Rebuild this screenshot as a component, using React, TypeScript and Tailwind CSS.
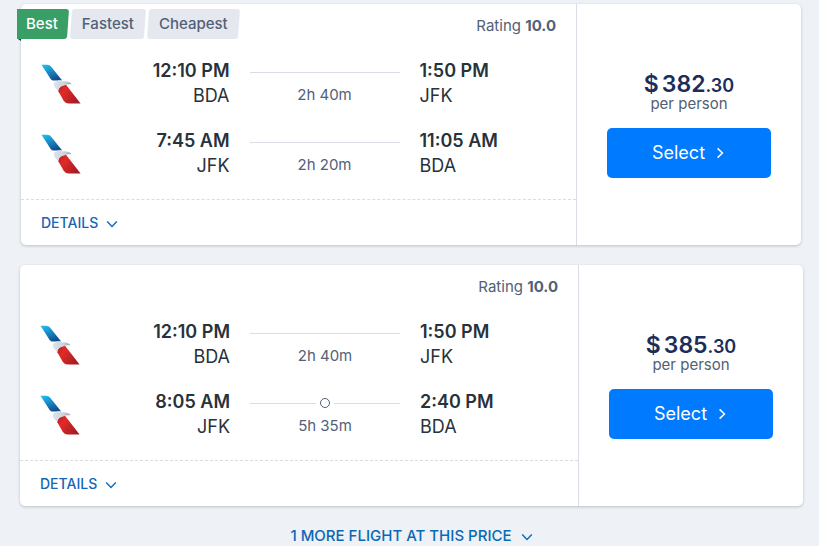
import { useId } from "react";

type Leg = {
  departTime: string;
  from: string;
  arriveTime: string;
  to: string;
  duration: string;
  stops: number;
};

type Flight = {
  id: string;
  rating: string;
  dollars: string;
  cents: string;
  badges: string[];
  legs: Leg[];
};

const flights: Flight[] = [
  {
    id: "f1",
    rating: "10.0",
    dollars: "382",
    cents: "30",
    badges: ["Best", "Fastest", "Cheapest"],
    legs: [
      { departTime: "12:10 PM", from: "BDA", arriveTime: "1:50 PM", to: "JFK", duration: "2h 40m", stops: 0 },
      { departTime: "7:45 AM", from: "JFK", arriveTime: "11:05 AM", to: "BDA", duration: "2h 20m", stops: 0 },
    ],
  },
  {
    id: "f2",
    rating: "10.0",
    dollars: "385",
    cents: "30",
    badges: [],
    legs: [
      { departTime: "12:10 PM", from: "BDA", arriveTime: "1:50 PM", to: "JFK", duration: "2h 40m", stops: 0 },
      { departTime: "8:05 AM", from: "JFK", arriveTime: "2:40 PM", to: "BDA", duration: "5h 35m", stops: 1 },
    ],
  },
];

function AirlineLogo() {
  const id = useId();
  return (
    <svg viewBox="0 0 40 40" className="mt-[5px] size-10" role="img" aria-label="American Airlines">
      <defs>
        <linearGradient id={`${id}b`} x1="0" y1="0" x2="0.5" y2="1">
          <stop offset="0" stopColor="#1fc4f4" />
          <stop offset="0.5" stopColor="#1a8cc8" />
          <stop offset="1" stopColor="#12518f" />
        </linearGradient>
        <linearGradient id={`${id}r`} x1="0" y1="0" x2="1" y2="0.6">
          <stop offset="0" stopColor="#b81f2a" />
          <stop offset="0.35" stopColor="#e22a27" />
          <stop offset="1" stopColor="#a51d25" />
        </linearGradient>
        <linearGradient id={`${id}g`} x1="0" y1="0" x2="1" y2="0">
          <stop offset="0" stopColor="#dde4ea" />
          <stop offset="0.6" stopColor="#cbd4dc" />
          <stop offset="1" stopColor="#97a4b0" />
        </linearGradient>
      </defs>
      <path d="M.5 .7H6C7.8 .7 9.2 1.5 10.4 3L21.2 16.4C18 15.8 16 16.6 11.8 16.4C10.2 15.9 9.4 14.8 8.7 13.5Z" fill={`url(#${id}b)`} />
      <path d="M17.3 27.2C17.2 24 19.8 21.6 25 20.8L39.6 39.5H28C25.4 39.5 23.6 38.2 22.4 36.2Z" fill={`url(#${id}r)`} />
      <path d="M12.6 19.6C13.2 17.7 15.5 16.8 18.5 16.9C23 17.4 29 16.8 30.6 20.2C27.8 20 26 20.4 24 21.2C20 21.6 17.4 23.8 17.2 27C14.6 24.5 12.6 22.6 12.6 19.6Z" fill={`url(#${id}g)`} />
    </svg>
  );
}

function ChevronDown() {
  return (
    <svg viewBox="0 0 12 12" className="mt-0.5 size-3" fill="none" stroke="currentColor" strokeWidth="1.4" aria-hidden="true">
      <path d="M1.2 3.6 6 8.4l4.8-4.8" />
    </svg>
  );
}

function ChevronRight() {
  return (
    <svg viewBox="0 0 12 12" className="mt-0.5 size-3" fill="none" stroke="currentColor" strokeWidth="1.5" aria-hidden="true">
      <path d="M3.6 1.4 8.4 6l-4.8 4.6" />
    </svg>
  );
}

function Badges({ labels }: { labels: string[] }) {
  return (
    <div className="absolute top-[5px] -left-1">
      <ul className="flex gap-[3px] font-medium">
        {labels.map((label, i) => (
          <li
            key={label}
            className={
              i === 0
                ? "relative isolate h-[30px] bg-linear-to-r from-[#3a9f67] from-60% to-transparent to-60% pr-[10px] pl-[9px] leading-[30px] text-white before:absolute before:inset-y-0 before:right-0 before:left-2 before:-z-10 before:-skew-x-4 before:rounded-[3px] before:bg-[#3a9f67]"
                : "relative isolate h-[30px] px-[11px] leading-[30px] text-[#526078] before:absolute before:inset-y-0 before:inset-x-0 before:-z-10 before:-skew-x-4 before:rounded-[3px] before:bg-[#e5e9ef]"
            }
          >
            {label}
          </li>
        ))}
      </ul>
      <div className="ml-px size-0 border-t-2 border-l-3 border-t-[#26323c] border-l-transparent" />
    </div>
  );
}

function LegRow({ leg }: { leg: Leg }) {
  return (
    <div className="grid h-[50px] grid-cols-[52px_1fr_150px_1fr] text-[18px] text-[#28323a]">
      <AirlineLogo />
      <div className="mr-5 text-right whitespace-nowrap">
        <div className="leading-6 font-semibold">{leg.departTime}</div>
        <div className="leading-[26px]">{leg.from}</div>
      </div>
      <div className="text-center text-[15px] leading-5 text-[#526078]">
        <div className="my-2 flex h-[10px] items-center gap-1">
          <span className="h-px flex-1 bg-[#dadde5]" />
          {leg.stops > 0 && <span className="size-[10px] rounded-full border border-[#526078]" />}
          {leg.stops > 0 && <span className="h-px flex-1 bg-[#dadde5]" />}
        </div>
        {leg.duration}
      </div>
      <div className="ml-5 whitespace-nowrap">
        <div className="leading-6 font-semibold">{leg.arriveTime}</div>
        <div className="leading-[26px]">{leg.to}</div>
      </div>
    </div>
  );
}

function FlightCard({ flight }: { flight: Flight }) {
  const featured = flight.badges.length > 0;
  return (
    <article
      className={
        featured
          ? "relative mr-[2px] ml-px flex rounded-[5px] bg-white shadow-[0_1px_3px_rgba(40,50,60,0.25)]"
          : "relative flex rounded-[5px] bg-white shadow-[0_1px_3px_rgba(40,50,60,0.25)]"
      }
    >
      {featured && <Badges labels={flight.badges} />}
      <div className="flex-1">
        <div className="px-5 pt-3 pb-5">
          <p className="mb-[23px] text-right leading-5 text-[#526078]">
            Rating <strong className="font-bold">{flight.rating}</strong>
          </p>
          <div className="flex flex-col gap-5">
            {flight.legs.map((leg) => (
              <LegRow key={leg.departTime} leg={leg} />
            ))}
          </div>
        </div>
        <div className="border-t border-dashed border-[#dadde0] px-5 py-3">
          <button type="button" className="flex h-[21px] items-center gap-2 text-[14px] font-medium text-[#1565b8]">
            DETAILS
            <ChevronDown />
          </button>
        </div>
      </div>
      <div className="w-[225px] border-l border-[#dadde5] px-[30px] pt-[69px] text-center">
        <div className="flex h-[22px] items-baseline justify-center text-[23px] leading-[22px] font-semibold text-[#1c2d5a]">
          <span className="mr-[3px]">$</span>
          <span>{flight.dollars}</span>
          <span className="text-[18px] leading-[18px]">.{flight.cents}</span>
        </div>
        <p className="leading-[18px] text-[#526070]">per person</p>
        <button
          type="button"
          className="mt-[15px] flex h-[50px] w-full items-center justify-center gap-[9px] rounded-[5px] bg-[#007aff] pb-0.5 text-[18px] text-white"
        >
          Select
          <ChevronRight />
        </button>
      </div>
    </article>
  );
}

export default function App() {
  return (
    <main className="min-h-screen bg-[#eef1f6] pt-1 pr-4 pl-5 font-['Inter','Liberation_Sans',sans-serif] text-[15px]">
      <div className="flex flex-col gap-5">
        {flights.map((flight) => (
          <FlightCard key={flight.id} flight={flight} />
        ))}
        <button type="button" className="flex items-center justify-center gap-[9px] leading-5 font-medium text-[#0a69b5]">
          1 MORE FLIGHT AT THIS PRICE
          <ChevronDown />
        </button>
      </div>
    </main>
  );
}
